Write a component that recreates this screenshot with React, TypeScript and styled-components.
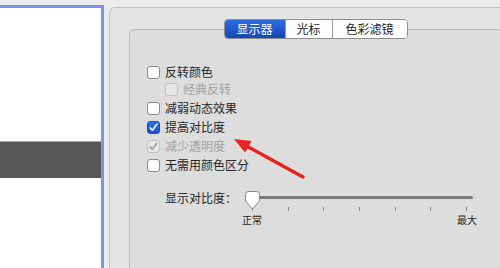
import React from "react";
import styled, { createGlobalStyle } from "styled-components";

const Global = createGlobalStyle`
  html, body { margin: 0; padding: 0; }
  body {
    background: #ebebeb;
    overflow: hidden;
    font-family: "Noto Sans CJK SC", "Noto Sans", sans-serif;
    color: #262626;
  }
`;

const Page = styled.div`
  position: relative;
  display: flex;
  width: 500px;
  height: 268px;
  overflow: hidden;
`;

const Sidebar = styled.div`
  flex-shrink: 0;
  width: 101px;
  height: 300px;
  margin-top: 5px;
  background: #ffffff;
  border-top: 3px solid #7f94e4;
  border-right: 3px solid #7f94e4;
  display: flex;
  flex-direction: column;
`;

const SidebarSelected = styled.div`
  margin-top: 133px;
  height: 36px;
  background: #575757;
  border-top: 1px solid #a4a4a4;
`;

const Pane = styled.div`
  flex-shrink: 0;
  width: 420px;
  height: 300px;
  margin-left: 5px;
  margin-top: 7px;
  box-sizing: border-box;
  border: 1px solid #c2c2c2;
  border-radius: 6px;
  background: #e4e4e4;
  padding: 21px 0 0 19px;
`;

const Group = styled.div`
  position: relative;
  box-sizing: border-box;
  width: 373px;
  height: 280px;
  border: 1px solid #bbbbbb;
  border-radius: 5px;
  background: #dddddd;
  padding: 32.5px 0 0 17px;
`;

const Tabs = styled.div`
  position: absolute;
  top: -11px;
  left: 50%;
  transform: translateX(-50%);
  display: flex;
  height: 20px;
  box-sizing: border-box;
  border: 1px solid #8e8e8e;
  border-radius: 4px;
  background: #ffffff;
  overflow: hidden;
`;

const Tab = styled.div<{ $active?: boolean; $w: number }>`
  width: ${(p) => p.$w}px;
  display: flex;
  align-items: center;
  justify-content: center;
  font-size: 12px;
  line-height: 18px;
  color: ${(p) => (p.$active ? "#ffffff" : "#1e1e1e")};
  background: ${(p) =>
    p.$active ? "linear-gradient(#2d6de2, #1547b6)" : "#ffffff"};
  & + & {
    border-left: 1px solid #9a9a9a;
  }
`;

const Options = styled.div`
  display: flex;
  flex-direction: column;
`;

const Row = styled.div<{ $sub?: boolean }>`
  display: flex;
  align-items: center;
  gap: 5px;
  height: 19px;
  margin-left: ${(p) => (p.$sub ? "18px" : "0")};
  margin-top: ${(p) => (p.$sub ? "-2px" : "0")};
  font-size: 12px;
  line-height: 14px;
  color: ${(p) => (p.$sub ? "#a6a6a6" : "#262626")};
`;

const Label = styled.span<{ $disabled?: boolean }>`
  color: ${(p) => (p.$disabled ? "#a3a3a3" : "inherit")};
`;

const Box = styled.span<{ $checked?: boolean; $disabled?: boolean }>`
  width: 13px;
  height: 13px;
  box-sizing: border-box;
  border-radius: 3px;
  display: flex;
  align-items: center;
  justify-content: center;
  flex-shrink: 0;
  border: 1px solid
    ${(p) =>
      p.$checked && !p.$disabled
        ? "#1a4fb8"
        : p.$disabled
        ? "#c2c2c2"
        : "#8a8a8a"};
  background: ${(p) =>
    p.$checked && !p.$disabled
      ? "linear-gradient(#2f6fe3, #1a52c6)"
      : p.$disabled
      ? "#e6e6e6"
      : "#ffffff"};
`;

const Check = ({ color }: { color: string }) => (
  <svg width="11" height="11" viewBox="0 0 11 11">
    <path
      d="M2.2 5.8 L4.4 8.3 L8.8 2.2"
      fill="none"
      stroke={color}
      strokeWidth="1.5"
      strokeLinecap="round"
      strokeLinejoin="round"
    />
  </svg>
);

const Checkbox = ({
  checked,
  disabled,
}: {
  checked?: boolean;
  disabled?: boolean;
}) => (
  <Box $checked={checked} $disabled={disabled}>
    {checked && <Check color={disabled ? "#9b9b9b" : "#ffffff"} />}
  </Box>
);

const SliderRow = styled.div`
  display: flex;
  align-items: flex-start;
  margin-top: 16px;
  padding-left: 18px;
`;

const SliderLabel = styled.div`
  width: 79px;
  font-size: 12px;
  line-height: 14px;
  margin-top: 0px;
  color: #262626;
`;

const SliderBox = styled.div`
  position: relative;
  width: 230px;
  display: flex;
  flex-direction: column;
`;

const Track = styled.div`
  height: 3px;
  margin: 5.5px 1px 0 8.5px;
  border-radius: 1.5px;
  background: #7b7b7b;
`;

const Ticks = styled.div`
  display: flex;
  justify-content: space-between;
  width: 215px;
  margin: 7.7px 0 0 8px;
`;

const Tick = styled.span`
  width: 1px;
  height: 4px;
  background: #8a8a8a;
`;

const TickLabels = styled.div`
  display: flex;
  justify-content: space-between;
  width: 235px;
  margin: 3px 0 0 -2px;
  font-size: 10px;
  line-height: 12px;
  color: #262626;
`;

const Thumb = styled.svg`
  position: absolute;
  left: 0;
  top: 0;
`;

const Arrow = styled.svg`
  position: absolute;
  left: 0;
  top: 0;
  pointer-events: none;
`;

export default function App() {
  return (
    <>
      <Global />
      <Page>
        <Sidebar>
          <SidebarSelected />
        </Sidebar>
        <Pane>
          <Group>
            <Tabs>
              <Tab $active $w={60}>显示器</Tab>
              <Tab $w={46}>光标</Tab>
              <Tab $w={74}>色彩滤镜</Tab>
            </Tabs>
            <Options>
              <Row>
                <Checkbox />
                <Label>反转颜色</Label>
              </Row>
              <Row $sub>
                <Checkbox disabled />
                <Label $disabled>经典反转</Label>
              </Row>
              <Row>
                <Checkbox />
                <Label>减弱动态效果</Label>
              </Row>
              <Row>
                <Checkbox checked />
                <Label>提高对比度</Label>
              </Row>
              <Row>
                <Checkbox checked disabled />
                <Label $disabled>减少透明度</Label>
              </Row>
              <Row>
                <Checkbox />
                <Label>无需用颜色区分</Label>
              </Row>
            </Options>
            <SliderRow>
              <SliderLabel>显示对比度：</SliderLabel>
              <SliderBox>
                <Track />
                <Ticks>
                  {Array.from({ length: 7 }).map((_, i) => (
                    <Tick key={i} />
                  ))}
                </Ticks>
                <TickLabels>
                  <span>正常</span>
                  <span>最大</span>
                </TickLabels>
                <Thumb width="17" height="19" viewBox="0 0 17 19">
                  <path
                    d="M1.5 3.5 Q1.5 0.5 4.5 0.5 H12.5 Q15.5 0.5 15.5 3.5 V10 L8.5 18 L1.5 10 Z"
                    fill="#ffffff"
                    stroke="#858585"
                    strokeWidth="1"
                  />
                </Thumb>
              </SliderBox>
            </SliderRow>
          </Group>
        </Pane>
        <Arrow width="500" height="268" viewBox="0 0 500 268">
          <line
            x1="303"
            y1="177"
            x2="247"
            y2="146.2"
            stroke="#e8221e"
            strokeWidth="3.5"
            strokeLinecap="round"
          />
          <polygon points="234,139 251.5,141 245,152.5" fill="#e8221e" />
        </Arrow>
      </Page>
    </>
  );
}
